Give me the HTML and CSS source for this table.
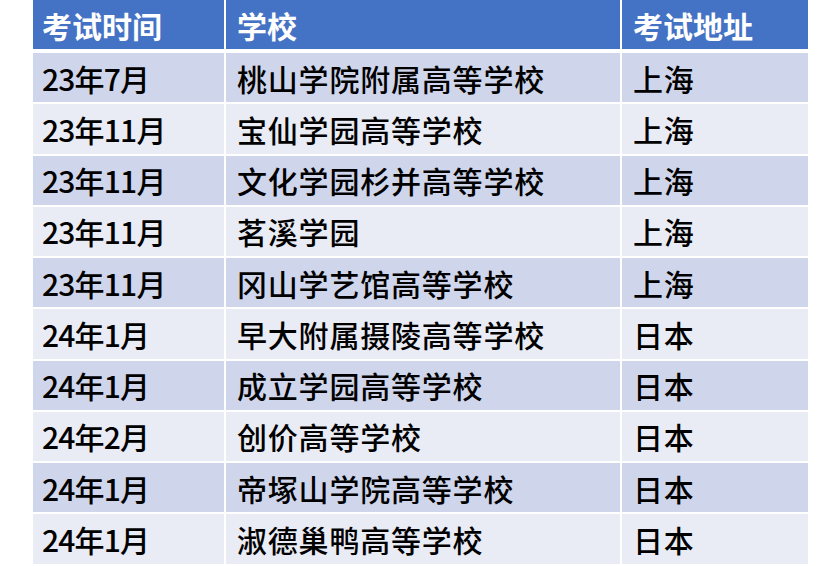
FILE: index.html
```html
<!DOCTYPE html>
<html lang="zh-CN">
<head>
<meta charset="utf-8">
<title>考试时间表</title>
<link rel="stylesheet" href="styles.css">
</head>
<body>
<div class="table">
  <div class="row head">
    <div class="cell c1">考试时间</div>
    <div class="cell c2">学校</div>
    <div class="cell c3">考试地址</div>
  </div>
  <div class="row odd">
    <div class="cell c1">23年7月</div>
    <div class="cell c2">桃山学院附属高等学校</div>
    <div class="cell c3">上海</div>
  </div>
  <div class="row even">
    <div class="cell c1">23年11月</div>
    <div class="cell c2">宝仙学园高等学校</div>
    <div class="cell c3">上海</div>
  </div>
  <div class="row odd">
    <div class="cell c1">23年11月</div>
    <div class="cell c2">文化学园杉并高等学校</div>
    <div class="cell c3">上海</div>
  </div>
  <div class="row even">
    <div class="cell c1">23年11月</div>
    <div class="cell c2">茗溪学园</div>
    <div class="cell c3">上海</div>
  </div>
  <div class="row odd">
    <div class="cell c1">23年11月</div>
    <div class="cell c2">冈山学艺馆高等学校</div>
    <div class="cell c3">上海</div>
  </div>
  <div class="row even">
    <div class="cell c1">24年1月</div>
    <div class="cell c2">早大附属摄陵高等学校</div>
    <div class="cell c3">日本</div>
  </div>
  <div class="row odd">
    <div class="cell c1">24年1月</div>
    <div class="cell c2">成立学园高等学校</div>
    <div class="cell c3">日本</div>
  </div>
  <div class="row even">
    <div class="cell c1">24年2月</div>
    <div class="cell c2">创价高等学校</div>
    <div class="cell c3">日本</div>
  </div>
  <div class="row odd">
    <div class="cell c1">24年1月</div>
    <div class="cell c2">帝塚山学院高等学校</div>
    <div class="cell c3">日本</div>
  </div>
  <div class="row even">
    <div class="cell c1">24年1月</div>
    <div class="cell c2">淑德巢鸭高等学校</div>
    <div class="cell c3">日本</div>
  </div>
</div>
</body>
</html>
```
FILE: styles.css
```css
html, body {
  margin: 0;
  padding: 0;
  background: #ffffff;
}
body {
  font-family: "Noto Sans CJK SC", "Noto Sans", sans-serif;
  overflow: hidden;
}
.table {
  margin-left: 33px;
  width: 775px;
  display: flex;
  flex-direction: column;
  gap: 2px;
}
.row {
  display: grid;
  grid-template-columns: 191px 394px 186px;
  column-gap: 2px;
  height: 49.25px;
}
.row.head {
  height: 49px;
  margin-bottom: 2px;
}
.cell {
  display: flex;
  align-items: center;
  font-size: 30px;
  line-height: 1;
  color: #000000;
  font-weight: 500;
  letter-spacing: 0.8px;
  white-space: nowrap;
  padding-left: 11px;
}
.cell.c1 {
  padding-left: 9px;
  letter-spacing: -0.8px;
}
.head .cell {
  background: #4472c4;
  color: #ffffff;
  font-weight: 700;
  letter-spacing: 0;
}
.odd .cell {
  background: #cfd5ea;
}
.even .cell {
  background: #e9ebf5;
}
```
